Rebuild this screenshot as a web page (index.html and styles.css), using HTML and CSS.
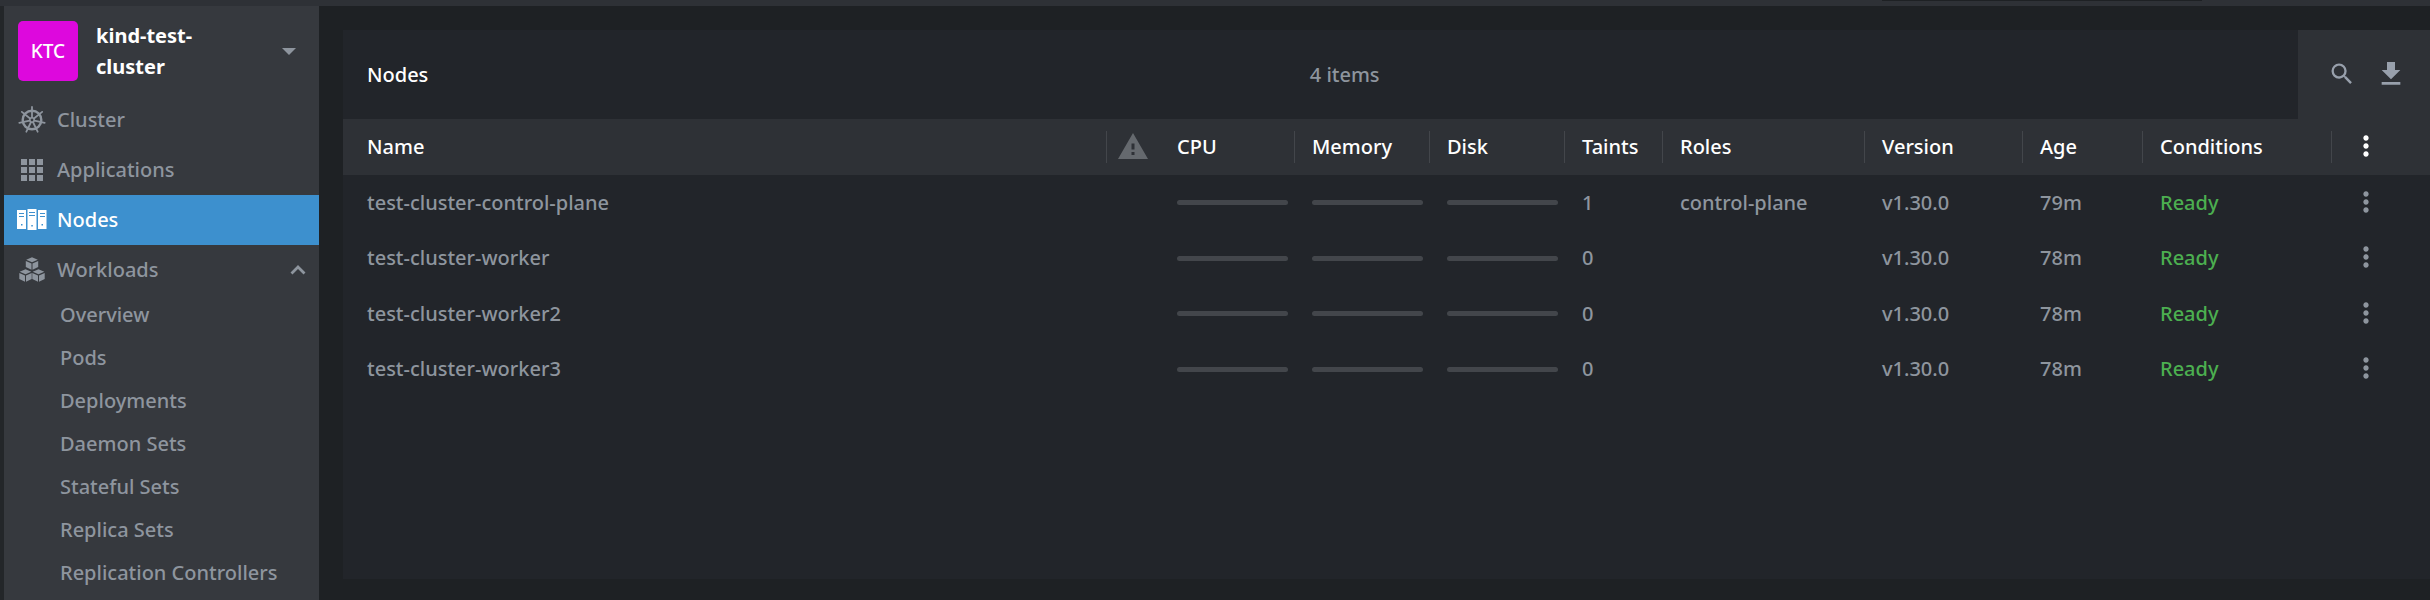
FILE: index.html
```html
<!DOCTYPE html>
<html lang="en">
<head>
<meta charset="utf-8">
<title>Nodes</title>
<link rel="stylesheet" href="styles.css">
</head>
<body>
<svg class="defs" aria-hidden="true">
  <symbol id="kebab" viewBox="0 0 24 24"><path d="M12 8c1.100 0 2-.9 2-2s-.9-2-2-2-2 .9-2 2 .9 2 2 2zm0 2c-1.100 0-2 .9-2 2s.9 2 2 2 2-.9 2-2-.9-2-2-2zm0 6c-1.100 0-2 .9-2 2s.9 2 2 2 2-.9 2-2-.9-2-2-2z"/></symbol>
</svg>
<header class="topbar"><div class="topbar-field"></div></header>
<div class="layout">
  <aside class="sidebar">
    <button class="cluster" type="button">
      <span class="avatar">KTC</span>
      <span class="cluster-name">kind-test-cluster</span>
      <svg class="caret" viewBox="0 0 14 7"><path d="M0 0h14L7 7z"/></svg>
    </button>
    <nav class="nav">
      <a class="nav-item" href="#cluster">
        <svg class="nav-icon" viewBox="0 0 28 28">
          <g fill="none" stroke="currentColor">
            <circle cx="14" cy="14" r="9.300" stroke-width="2.400"/>
            <circle cx="14" cy="14" r="2.200" stroke-width="1.500"/>
            <g stroke-width="1.800" stroke-linecap="round">
              <path id="spoke" d="M14 11.500V1"/>
              <use href="#spoke" transform="rotate(51.430 14 14)"/>
              <use href="#spoke" transform="rotate(102.860 14 14)"/>
              <use href="#spoke" transform="rotate(154.290 14 14)"/>
              <use href="#spoke" transform="rotate(205.710 14 14)"/>
              <use href="#spoke" transform="rotate(257.140 14 14)"/>
              <use href="#spoke" transform="rotate(308.570 14 14)"/>
            </g>
          </g>
        </svg>
        <span>Cluster</span>
      </a>
      <a class="nav-item" href="#applications">
        <svg class="nav-icon" viewBox="0 0 28 28"><path d="M3 3h6v6H3zM11 3h6v6h-6zM19 3h6v6h-6zM3 11h6v6H3zM11 11h6v6h-6zM19 11h6v6h-6zM3 19h6v6H3zM11 19h6v6h-6zM19 19h6v6h-6z"/></svg>
        <span>Applications</span>
      </a>
      <a class="nav-item active" href="#nodes" aria-current="page">
        <svg class="nav-icon" viewBox="0 0 28 28"><path fill-rule="evenodd" d="M-1 4h9v19h-9zM1 7v1h5V7zM1 10v1h5v-1zM3 18h1.500v1.500H3zM9.500 3h9v21h-9zM11 6v1h6V6zM11 9v1h6V9zM13.300 19h1.500v1.500h-1.500zM20 4h8.500v19H20zM22 7v1h5V7zM22 10v1h5v-1zM23.500 18H25v1.500h-1.500z"/></svg>
        <span>Nodes</span>
      </a>
      <a class="nav-item" href="#workloads" aria-expanded="true">
        <svg class="nav-icon" viewBox="0 0 28 28">
          <g id="cube"><path d="M14 1.200l5.800 2.500L14 6.300 8.200 3.700zM7.800 4.900l5.700 2.500v6.300l-5.700-2.800zM20.200 4.900l-5.700 2.500v6.300l5.700-2.800z"/></g>
          <use href="#cube" x="-6.500" y="12"/>
          <use href="#cube" x="6.500" y="12"/>
        </svg>
        <span>Workloads</span>
        <svg class="chevron" viewBox="0 0 16 10"><path d="M1.500 8.500L8 2l6.500 6.500" fill="none" stroke="currentColor" stroke-width="2.800"/></svg>
      </a>
      <div class="subnav">
        <a href="#overview">Overview</a>
        <a href="#pods">Pods</a>
        <a href="#deployments">Deployments</a>
        <a href="#daemonsets">Daemon Sets</a>
        <a href="#statefulsets">Stateful Sets</a>
        <a href="#replicasets">Replica Sets</a>
        <a href="#replicationcontrollers">Replication Controllers</a>
      </div>
    </nav>
  </aside>
  <main class="main">
    <section class="panel">
      <div class="panel-head">
        <div class="panel-title">
          <h1>Nodes</h1>
          <p class="count">4 items</p>
        </div>
        <div class="tools">
          <button type="button" aria-label="Search"><svg class="search" viewBox="0 0 24 24"><path d="M15.500 14h-.79l-.28-.27A6.471 6.471 0 0 0 16 9.500 6.500 6.500 0 1 0 9.500 16c1.610 0 3.090-.59 4.230-1.570l.27.28v.79l5 4.990L20.490 19l-4.990-5zm-6 0C7.010 14 5 11.990 5 9.500S7.010 5 9.500 5 14 7.010 14 9.500 11.990 14 9.500 14z"/></svg></button>
          <button type="button" aria-label="Download"><svg class="download" viewBox="0 0 24 24"><path d="M19 9h-4V3H9v6H5l7 7 7-7zM5 18v2h14v-2H5z"/></svg></button>
        </div>
      </div>
      <table class="table">
        <colgroup><col><col class="c-warn"><col class="c-meter"><col class="c-meter"><col class="c-meter"><col class="c-taints"><col class="c-roles"><col class="c-version"><col class="c-age"><col class="c-cond"><col class="c-menu"></colgroup>
        <thead>
          <tr>
            <th class="name sep">Name</th>
            <th class="warn"><svg viewBox="0 0 30 26" role="img" aria-label="Warnings"><path fill-rule="evenodd" d="M15 0l15 26H0zM13.500 10.500v6h3v-6zM13.500 19v3h3v-3z"/></svg></th>
            <th class="sep">CPU</th><th class="sep">Memory</th><th class="sep">Disk</th><th class="sep">Taints</th><th class="sep">Roles</th><th class="sep">Version</th><th class="sep">Age</th><th class="sep">Conditions</th>
            <th class="menu"><button type="button" aria-label="Columns"><svg><use href="#kebab"/></svg></button></th>
          </tr>
        </thead>
        <tbody>
          <tr><td class="name">test-cluster-control-plane</td><td></td><td><div class="meter"></div></td><td><div class="meter"></div></td><td><div class="meter"></div></td><td>1</td><td>control-plane</td><td>v1.30.0</td><td>79m</td><td class="ready">Ready</td><td class="menu"><button type="button" aria-label="Node actions"><svg><use href="#kebab"/></svg></button></td></tr>
          <tr><td class="name">test-cluster-worker</td><td></td><td><div class="meter"></div></td><td><div class="meter"></div></td><td><div class="meter"></div></td><td>0</td><td></td><td>v1.30.0</td><td>78m</td><td class="ready">Ready</td><td class="menu"><button type="button" aria-label="Node actions"><svg><use href="#kebab"/></svg></button></td></tr>
          <tr><td class="name">test-cluster-worker2</td><td></td><td><div class="meter"></div></td><td><div class="meter"></div></td><td><div class="meter"></div></td><td>0</td><td></td><td>v1.30.0</td><td>78m</td><td class="ready">Ready</td><td class="menu"><button type="button" aria-label="Node actions"><svg><use href="#kebab"/></svg></button></td></tr>
          <tr><td class="name">test-cluster-worker3</td><td></td><td><div class="meter"></div></td><td><div class="meter"></div></td><td><div class="meter"></div></td><td>0</td><td></td><td>v1.30.0</td><td>78m</td><td class="ready">Ready</td><td class="menu"><button type="button" aria-label="Node actions"><svg><use href="#kebab"/></svg></button></td></tr>
        </tbody>
      </table>
    </section>
  </main>
</div>
</body>
</html>
```
FILE: styles.css
```css
* { box-sizing: border-box; }

body {
  margin: 0;
  height: 100vh;
  display: flex;
  flex-direction: column;
  overflow: hidden;
  background: #1e2124;
  color: #8e959e;
  font: 500 20px/30px "Noto Sans", "Open Sans", sans-serif;
}

svg { display: block; fill: currentColor; }
.defs { position: absolute; width: 0; height: 0; }

button {
  display: block;
  padding: 0;
  border: 0;
  background: none;
  color: inherit;
  font: inherit;
  text-align: left;
  cursor: pointer;
}

a { color: inherit; text-decoration: none; }
h1, p { margin: 0; font-size: inherit; font-weight: 500; }

.topbar {
  flex: none;
  height: 6px;
  padding: 0 228px 0 0;
  background: #2e3136;
}
.topbar-field {
  width: 320px;
  height: 1px;
  margin-left: auto;
  background: #1e2124;
}

.layout { flex: 1; min-height: 0; display: flex; }

.sidebar {
  flex: none;
  width: 319px;
  overflow: hidden;
  border-left: 4px solid #232629;
  background: #36393e;
}

.cluster {
  display: flex;
  align-items: center;
  width: 100%;
  height: 90px;
  padding: 0 23px 0 14px;
}
.avatar {
  display: grid;
  place-items: center;
  width: 60px;
  height: 60px;
  border-radius: 5px;
  background: #dd08dd;
  color: #fff;
  font-size: 19px;
  font-weight: 500;
}
.cluster-name {
  width: 120px;
  margin-left: 18px;
  color: #fff;
  font-weight: 700;
  line-height: 31px;
}
.caret { width: 14px; height: 7px; margin-left: auto; }

.nav { margin-top: -1px; }
.nav-item {
  display: flex;
  align-items: center;
  gap: 11px;
  height: 50px;
  padding: 0 13px 0 14px;
}
.nav-item.active { background: #3d90ce; color: #fff; }
.nav-icon { width: 28px; height: 28px; overflow: visible; }
.chevron { width: 16px; height: 10px; margin-left: auto; }

.subnav { margin-top: -2px; }
.subnav a {
  display: block;
  height: 43px;
  padding-left: 56px;
  line-height: 43px;
}

.main { flex: 1; min-width: 0; padding: 24px 0 21px 24px; }
.panel { height: 100%; background: #22252a; }

.panel-head { display: flex; height: 89px; }
.panel-title {
  flex: 1;
  display: flex;
  align-items: center;
  padding: 0 37px 0 24px;
}
.panel-title h1 { color: #fff; }
.count { flex: 1; text-align: center; }

.tools {
  display: flex;
  align-items: center;
  gap: 19px;
  padding: 0 23px 2px 30px;
  background: #2e3136;
  color: #98a0ac;
}
.search { width: 28px; height: 28px; }
.download { width: 32px; height: 32px; }

.table {
  width: 100%;
  height: 278px;
  table-layout: fixed;
  border-collapse: collapse;
}
.c-warn { width: 53px; }
.c-meter { width: 135px; }
.c-taints { width: 98px; }
.c-roles { width: 202px; }
.c-version { width: 158px; }
.c-age { width: 120px; }
.c-cond { width: 189px; }
.c-menu { width: 98px; }

th, td {
  height: 55px;
  padding: 0 7px 0 17px;
  text-align: left;
  white-space: nowrap;
}
th {
  height: 56px;
  background: #2e3136;
  color: #fff;
  font-weight: 500;
}
th.sep {
  background: linear-gradient(#43464b, #43464b) right center / 1px 32px no-repeat #2e3136;
}
.name { padding-left: 24px; }
.warn { padding: 0 11px 2px; color: #65696e; }
.warn svg { width: 30px; height: 26px; }
.menu { padding: 0 0 2px 18px; }
.menu svg { width: 32px; height: 32px; }
.meter { height: 5px; border-radius: 3px; background: #43464b; }
.ready { color: #4caf50; }
```
